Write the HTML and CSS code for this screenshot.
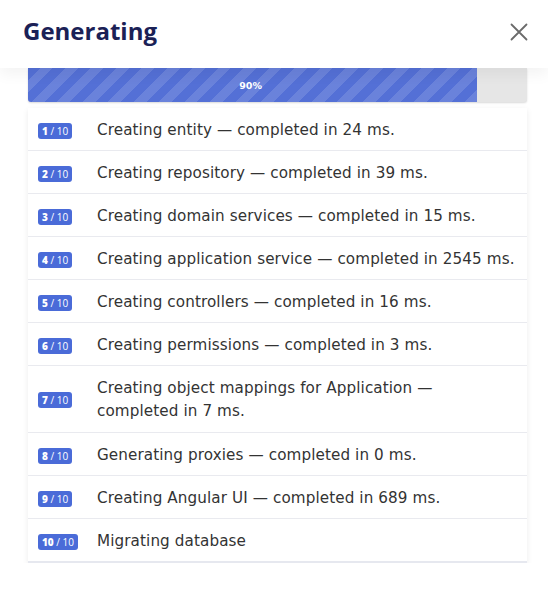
FILE: index.html
```html
<!DOCTYPE html>
<html lang="en">
<head>
<meta charset="utf-8">
<title>Generating</title>
<link rel="stylesheet" href="styles.css">
</head>
<body>
<div class="modal">
  <header class="modal-header">
    <h1 class="title">Generating</h1>
    <button class="close" aria-label="Close">
      <svg width="18" height="18" viewBox="0 0 18 18"><path d="M1.5 1.5 L16.5 16.5 M16.5 1.5 L1.5 16.5" stroke="#6b6b6b" stroke-width="1.8" fill="none" stroke-linecap="round"/></svg>
    </button>
  </header>
  <div class="modal-body">
    <div class="progress">
      <div class="progress-bar" style="width:90%">90%</div>
    </div>
    <ul class="steps">
      <li class="step"><span class="badge-cell"><span class="badge"><b>1</b> / 10</span></span><span class="text">Creating entity — <span class="done">completed in 24 ms.</span></span></li>
      <li class="step"><span class="badge-cell"><span class="badge"><b>2</b> / 10</span></span><span class="text">Creating repository — <span class="done">completed in 39 ms.</span></span></li>
      <li class="step"><span class="badge-cell"><span class="badge"><b>3</b> / 10</span></span><span class="text">Creating domain services — <span class="done">completed in 15 ms.</span></span></li>
      <li class="step"><span class="badge-cell"><span class="badge"><b>4</b> / 10</span></span><span class="text">Creating application service — <span class="done">completed in 2545 ms.</span></span></li>
      <li class="step"><span class="badge-cell"><span class="badge"><b>5</b> / 10</span></span><span class="text">Creating controllers — <span class="done">completed in 16 ms.</span></span></li>
      <li class="step"><span class="badge-cell"><span class="badge"><b>6</b> / 10</span></span><span class="text">Creating permissions — <span class="done">completed in 3 ms.</span></span></li>
      <li class="step"><span class="badge-cell"><span class="badge"><b>7</b> / 10</span></span><span class="text">Creating object mappings for Application — <span class="done">completed in 7 ms.</span></span></li>
      <li class="step"><span class="badge-cell"><span class="badge"><b>8</b> / 10</span></span><span class="text">Generating proxies — <span class="done">completed in 0 ms.</span></span></li>
      <li class="step"><span class="badge-cell"><span class="badge"><b>9</b> / 10</span></span><span class="text">Creating Angular UI — <span class="done">completed in 689 ms.</span></span></li>
      <li class="step"><span class="badge-cell"><span class="badge"><b>10</b> / 10</span></span><span class="text">Migrating database</span></li>
    </ul>
  </div>
</div>
</body>
</html>
```
FILE: styles.css
```css
* { box-sizing: border-box; }
html, body { margin: 0; padding: 0; background: #fff; }
body { font-family: "DejaVu Sans", "Noto Sans", sans-serif; color: #333; }

.modal { width: 548px; }

.modal-header {
  height: 68px;
  display: flex;
  align-items: center;
  justify-content: space-between;
  padding: 0 20px 0 23px;
  background: #fff;
  box-shadow: 0 6px 14px rgba(0, 0, 0, 0.05);
  position: relative;
  z-index: 1;
}
.title {
  margin: 0;
  font-family: "Open Sans", sans-serif;
  font-size: 24px;
  font-weight: 700;
  color: #1b2156;
  letter-spacing: 0;
  line-height: 1;
  padding-bottom: 6px;
}
.close {
  border: 0;
  background: transparent;
  padding: 0;
  display: flex;
  margin-bottom: 4px;
}

.modal-body { padding: 0 21px 0 28px; }

.progress {
  height: 34px;
  background: #e6e6e6;
  border-radius: 0 0 3px 3px;
  box-shadow: 0 1px 2px rgba(0, 0, 0, 0.15);
  overflow: hidden;
  display: flex;
}
.progress-bar {
  height: 100%;
  background-color: #5470d6;
  background-image: repeating-linear-gradient(-45deg, rgba(255,255,255,0.13) 0 9px, transparent 9px 18px);
  color: #fff;
  font-size: 9.5px;
  font-weight: 700;
  display: flex;
  align-items: center;
  justify-content: center;
  padding-right: 4px;
}

.steps {
  list-style: none;
  margin: 6px 0 0;
  padding: 0;
  background: #fff;
  box-shadow: 0 2px 6px rgba(0, 0, 0, 0.08);
}
.step {
  display: flex;
  align-items: center;
  padding: 11px 8px 8px 10px;
  border-bottom: 1px solid #e9eaef;
  font-size: 15.2px;
  letter-spacing: 0.1px;
  line-height: 23px;
  color: #333;
}
.step:nth-child(7) { padding-top: 11px; padding-bottom: 9px; }
.step:last-child { border-bottom: 2px solid #e6e8ef; }
.badge-cell { flex: 0 0 59px; display: flex; }
.badge {
  font-family: "Open Sans", sans-serif;
  background: #4a6bd8;
  color: #fff;
  font-size: 10px;
  font-weight: 400;
  line-height: 16px;
  padding: 0 4px;
  border-radius: 3px;
  white-space: nowrap;
  letter-spacing: 0;
}
.badge b { font-weight: 800; }
.text { flex: 1; }
.done { white-space: nowrap; }
```
